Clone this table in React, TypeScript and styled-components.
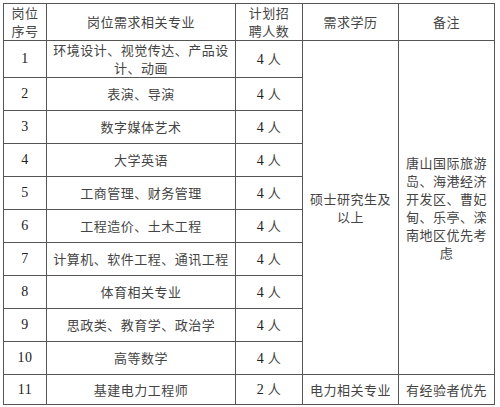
import React from 'react';
import styled, { createGlobalStyle } from 'styled-components';

const GlobalStyle = createGlobalStyle`
  html, body {
    margin: 0;
    padding: 0;
    background: #fff;
  }
`;

const Page = styled.div`
  padding: 3px;
  width: 500px;
  box-sizing: border-box;
`;

const Table = styled.table`
  border-collapse: collapse;
  table-layout: fixed;
  width: 491px;
  font-family: "Noto Sans CJK SC", sans-serif;
  font-size: 13px;
  color: #444;
  letter-spacing: 0.5px;
`;

const Row = styled.tr<{ $h: number }>`
  height: ${(p) => p.$h}px;
`;

const Cell = styled.td<{ $num?: boolean }>`
  border: 1px solid #555;
  padding: 0 5px;
  text-align: center;
  vertical-align: middle;
  line-height: 18px;
  font-family: ${(p) => (p.$num ? '"Liberation Serif", "Noto Sans CJK SC", serif' : '"Noto Sans CJK SC", sans-serif')};
  font-size: ${(p) => (p.$num ? '14px' : '13px')};
  color: ${(p) => (p.$num ? '#222' : '#444')};
`;

const HeadCell = styled(Cell).attrs({ as: 'th' })`
  font-weight: normal;
  padding: 0 2px;
`;

const Count = styled.span`
  font-family: "Liberation Serif", serif;
  font-size: 14px;
  color: #222;
`;

const Person = styled.span`
  font-family: "Noto Sans CJK SC", sans-serif;
  font-size: 13px;
  color: #444;
`;

type Job = { no: number; major: string; count: number };

const jobs: Job[] = [
  { no: 1, major: '环境设计、视觉传达、产品设计、动画', count: 4 },
  { no: 2, major: '表演、导演', count: 4 },
  { no: 3, major: '数字媒体艺术', count: 4 },
  { no: 4, major: '大学英语', count: 4 },
  { no: 5, major: '工商管理、财务管理', count: 4 },
  { no: 6, major: '工程造价、土木工程', count: 4 },
  { no: 7, major: '计算机、软件工程、通讯工程', count: 4 },
  { no: 8, major: '体育相关专业', count: 4 },
  { no: 9, major: '思政类、教育学、政治学', count: 4 },
  { no: 10, major: '高等数学', count: 4 },
];

const Headcount = ({ n }: { n: number }) => (
  <>
    <Count>{n}</Count> <Person>人</Person>
  </>
);

const App = () => {
  return (
    <Page>
      <GlobalStyle />
      <Table>
        <colgroup>
          <col style={{ width: 43 }} />
          <col style={{ width: 189 }} />
          <col style={{ width: 67 }} />
          <col style={{ width: 96 }} />
          <col style={{ width: 96 }} />
        </colgroup>
        <tbody>
          <Row $h={36}>
            <HeadCell>岗位<br />序号</HeadCell>
            <HeadCell>岗位需求相关专业</HeadCell>
            <HeadCell>计划招<br />聘人数</HeadCell>
            <HeadCell>需求学历</HeadCell>
            <HeadCell>备注</HeadCell>
          </Row>
          {jobs.map((job, i) => (
            <Row key={job.no} $h={i === 0 ? 36 : 33}>
              <Cell $num>{job.no}</Cell>
              <Cell>{job.major}</Cell>
              <Cell><Headcount n={job.count} /></Cell>
              {i === 0 && (
                <>
                  <Cell rowSpan={10}>硕士研究生及以上</Cell>
                  <Cell rowSpan={10}>唐山国际旅游岛、海港经济开发区、曹妃甸、乐亭、滦南地区优先考虑</Cell>
                </>
              )}
            </Row>
          ))}
          <Row $h={30}>
            <Cell $num>11</Cell>
            <Cell>基建电力工程师</Cell>
            <Cell><Headcount n={2} /></Cell>
            <Cell>电力相关专业</Cell>
            <Cell>有经验者优先</Cell>
          </Row>
        </tbody>
      </Table>
    </Page>
  );
};

export default App;
